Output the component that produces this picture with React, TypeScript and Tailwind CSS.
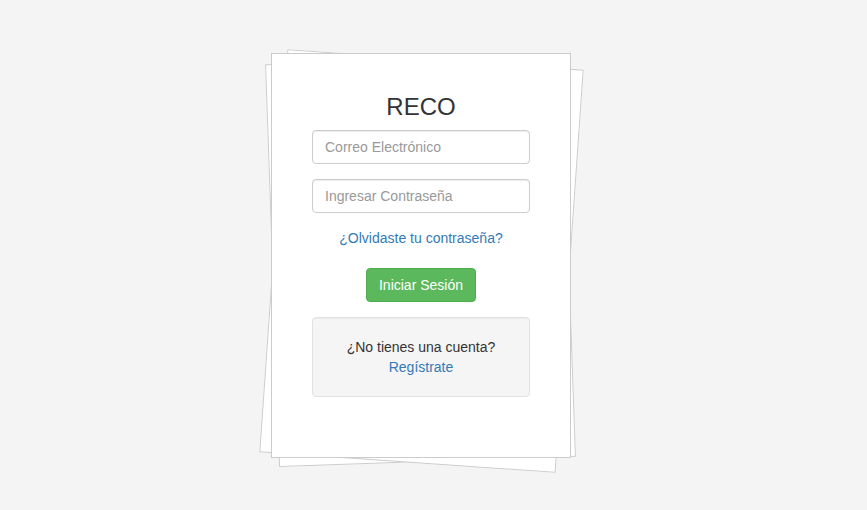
export default function App() {
  return (
    <div className="min-h-screen w-full bg-[#f4f4f4] font-['Liberation_Sans',Arial,sans-serif] text-[14px] leading-[20px] text-[#333]">
      <div className="pl-[271px] pt-[53px]">
        <div className="relative w-[300px] h-[405px]">
          {/* stacked sheets behind the card */}
          <div className="absolute left-[0.5px] top-[5.5px] w-[297px] h-[403px] -rotate-2 bg-white border border-[#cdcdcd]" />
          <div className="absolute left-[1.5px] top-[5.5px] w-[297px] h-[404px] rotate-[4deg] bg-white border border-[#cdcdcd]" />

          <div className="relative h-full bg-white border border-[#cbcbcb] px-[40px] pt-[40px]">
            <h3 className="text-center text-[24px] leading-[26.4px] font-normal mb-[10px]">RECO</h3>

            <input
              type="email"
              placeholder="Correo Electrónico"
              className="block w-full h-[34px] px-[12px] py-[6px] border border-[#ccc] rounded-[4px] bg-white text-[14px] text-[#555] placeholder:text-[#999] outline-none shadow-[inset_0_1px_1px_rgba(0,0,0,0.075)]"
            />
            <input
              type="password"
              placeholder="Ingresar Contraseña"
              className="block w-full h-[34px] mt-[15px] px-[12px] py-[6px] border border-[#ccc] rounded-[4px] bg-white text-[14px] text-[#555] placeholder:text-[#999] outline-none shadow-[inset_0_1px_1px_rgba(0,0,0,0.075)]"
            />

            <div className="mt-[15px] text-center">
              <a href="#" className="text-[#337ab7]">¿Olvidaste tu contraseña?</a>
            </div>

            <div className="mt-[20px] flex justify-center">
              <button className="h-[34px] px-[12px] rounded-[4px] bg-[#5cb85c] border border-[#4cae4c] text-white text-[14px]">
                Iniciar Sesión
              </button>
            </div>

            <div className="mt-[15px] h-[80px] p-[19px] bg-[#f5f5f5] border border-[#e3e3e3] rounded-[4px] shadow-[inset_0_1px_1px_rgba(0,0,0,0.05)] text-center">
              <div>¿No tienes una cuenta?</div>
              <a href="#" className="text-[#337ab7]">Regístrate</a>
            </div>
          </div>
        </div>
      </div>
    </div>
  );
}
